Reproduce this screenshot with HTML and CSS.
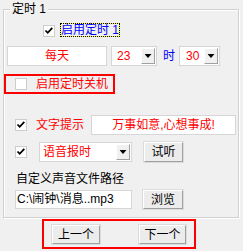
FILE: index.html
```html
<!DOCTYPE html>
<html>
<head>
<meta charset="utf-8">
<title>定时</title>
<link rel="stylesheet" href="styles.css">
</head>
<body>
	<fieldset class="group">
		<legend>定时 1</legend>
		<div class="row r-enable">
			<span class="chk"><svg viewBox="0 0 12 12" width="12" height="12"><path d="M2.5 5.5l2.2 2.3 4.6-5" fill="none" stroke="#000" stroke-width="1.8"/></svg></span>
			<span class="focus">启用定时 1</span>
		</div>
		<div class="row r-time">
			<span class="edit day">每天</span>
			<span class="combo hour"><span class="val">23</span><span class="drop"></span></span>
			<span class="unit">时</span>
			<span class="combo minute"><span class="val">30</span><span class="drop"></span></span>
		</div>
		<div class="redbox shutdown">
			<span class="chk"></span>
			<span>启用定时关机</span>
		</div>
		<div class="row r-tip">
			<span class="chk"><svg viewBox="0 0 12 12" width="12" height="12"><path d="M2.5 5.5l2.2 2.3 4.6-5" fill="none" stroke="#000" stroke-width="1.8"/></svg></span>
			<span class="tip-label">文字提示</span>
			<span class="edit tip">万事如意,心想事成!</span>
		</div>
		<div class="row r-voice">
			<span class="chk"><svg viewBox="0 0 12 12" width="12" height="12"><path d="M2.5 5.5l2.2 2.3 4.6-5" fill="none" stroke="#000" stroke-width="1.8"/></svg></span>
			<span class="combo voice"><span class="val">语音报时</span><span class="drop"></span></span>
			<button class="btn listen">试听</button>
		</div>
		<div class="path-label">自定义声音文件路径</div>
		<div class="row r-path">
			<span class="edit path">C:\闹钟\消息..mp3</span>
			<button class="btn browse">浏览</button>
		</div>
	</fieldset>
	<div class="redbox nav">
		<button class="btn prev">上一个</button>
		<button class="btn next">下一个</button>
	</div>
</body>
</html>
```
FILE: styles.css
```css
body {
	margin: 0;
	width: 243px;
	height: 251px;
	overflow: hidden;
	background: #f0f0f0;
	font: 12px/14px "Liberation Sans", "Noto Sans CJK SC", sans-serif;
	color: #000;
}
.group {
	margin: 2px 4px 0 3px;
	padding: 0 0 8px;
	border: 1px solid #d0d0d0;
	box-shadow: inset 1px 1px #fff, 1px 1px #fff;
	min-width: 0;
}
.group legend {
	margin-left: 6px;
	padding: 0 2px;
	line-height: 14px;
	background: #f0f0f0;
}
.row {
	display: flex;
	align-items: center;
}
.chk {
	display: block;
	flex: none;
	width: 12px;
	height: 12px;
	box-sizing: border-box;
	background: #fff;
	border: 1px solid #cdcdcd;
}
.chk svg {
	display: block;
	margin: -1px;
}
.edit {
	display: block;
	box-sizing: border-box;
	height: 20px;
	line-height: 18px;
	background: #fff;
	border: 1px solid #d6d6d6;
	white-space: nowrap;
	overflow: hidden;
}
.combo {
	display: flex;
	box-sizing: border-box;
	height: 20px;
	padding: 1px;
	background: #fff;
	border: 1px solid #d6d6d6;
}
.combo .val {
	flex: 1;
	line-height: 16px;
	color: #f00;
}
.drop {
	display: flex;
	align-items: center;
	justify-content: center;
	width: 14px;
	box-sizing: border-box;
	background: #f0f0f0;
	border: 1px solid;
	border-color: #fff #a0a0a0 #a0a0a0 #fff;
}
.drop::after {
	content: "";
	width: 7px;
	height: 4px;
	background: #000;
	clip-path: polygon(0 0, 100% 0, 50% 100%);
}
.btn {
	display: block;
	box-sizing: border-box;
	height: 20px;
	padding: 0;
	font: inherit;
	color: #000;
	background: #ececec;
	border: 1px solid;
	border-color: #fff #a0a0a0 #a0a0a0 #fff;
	box-shadow: 0 0 0 1px #dcdcdc;
}
.redbox {
	box-sizing: border-box;
	border: 2px solid #f00;
}

.r-enable {
	margin: 6px 0 0 39px;
	height: 15px;
	gap: 5px;
}
.r-enable .chk {
	margin-top: 2px;
}
.focus {
	color: #00f;
	line-height: 12px;
	border: 1px solid #ff0;
	outline: 1px dotted #000;
	outline-offset: -1px;
}

.r-time {
	margin: 9px 0 0 3px;
	height: 20px;
}
.day {
	width: 100px;
	text-align: center;
	color: #f00;
}
.hour {
	width: 46px;
	margin-left: 4px;
}
.hour .val {
	padding-left: 4px;
}
.unit {
	margin: 0 4px 0 6px;
	color: #00f;
}
.minute {
	width: 41px;
}
.minute .val {
	padding-left: 5px;
}

.shutdown {
	display: flex;
	align-items: center;
	gap: 9px;
	margin-top: 8px;
	padding-left: 9px;
	width: 111px;
	height: 20px;
	color: #f00;
}

.r-tip {
	margin: 21px 0 0 11px;
	height: 20px;
}
.tip-label {
	margin-left: 9px;
	color: #f00;
}
.tip {
	width: 145px;
	margin-left: 7px;
	text-align: center;
	color: #f00;
}

.r-voice {
	margin: 7px 0 0 11px;
	height: 20px;
}
.voice {
	width: 93px;
	margin-left: 12px;
}
.voice .val {
	padding-left: 2px;
}
.listen {
	width: 39px;
	margin-left: 12px;
}

.path-label {
	margin: 10px 0 0 12px;
}
.r-path {
	margin: 4px 0 0 11px;
	height: 19px;
}
.path {
	width: 117px;
	height: 19px;
	line-height: 17px;
	padding-left: 1px;
}
.browse {
	width: 40px;
	height: 19px;
	margin-left: 11px;
}

.nav {
	display: flex;
	align-items: flex-start;
	gap: 39px;
	margin: 1px 0 0 42px;
	padding: 4px 0 0 8px;
	width: 154px;
	height: 30px;
}
.prev {
	width: 48px;
	height: 19px;
}
.next {
	width: 47px;
	height: 19px;
}
```
